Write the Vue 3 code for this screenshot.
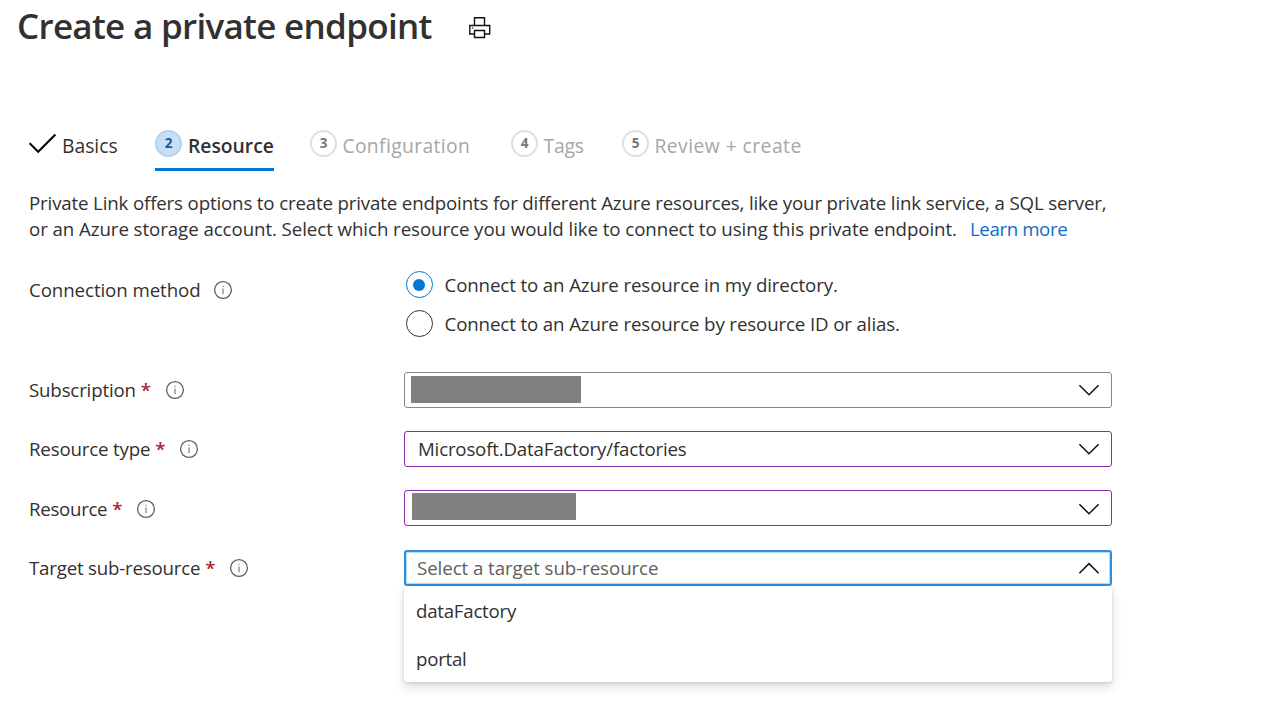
<script setup>
import { ref } from 'vue'

const steps = [
  { n: 1, label: 'Basics', state: 'done', key: 'basics' },
  { n: 2, label: 'Resource', state: 'active', key: 'res' },
  { n: 3, label: 'Configuration', state: 'todo', key: 'config' },
  { n: 4, label: 'Tags', state: 'todo', key: 'tags' },
  { n: 5, label: 'Review + create', state: 'todo', key: 'review' },
]
const fields = [
  { key: 'subscription', label: 'Subscription', redacted: true },
  { key: 'type', label: 'Resource type', value: 'Microsoft.DataFactory/factories', edited: true },
  { key: 'resource', label: 'Resource', redacted: true, edited: true },
  { key: 'target', label: 'Target sub-resource', placeholder: 'Select a target sub-resource', options: ['dataFactory', 'portal'] },
]
const methods = [
  'Connect to an Azure resource in my directory.',
  'Connect to an Azure resource by resource ID or alias.',
]
const method = ref(0)
</script>

<template>
  <main class="page">
    <header class="header">
      <h1>Create a private endpoint</h1>
      <svg class="printer" width="24" height="24" viewBox="0 0 24 24" fill="none" stroke="#111" stroke-width="1.4">
        <path d="M6.5 9V1.8h10V9" />
        <path d="M6.5 18H1.8V9.5h19.9V18h-5.2" />
        <path d="M6.5 14.5h10v7h-10z" />
        <path d="M4 12h1.5" stroke-width="1" />
      </svg>
    </header>

    <nav class="steps">
      <div v-for="s in steps" :key="s.key" class="step" :class="[s.state, s.key]">
        <svg v-if="s.state === 'done'" class="check" width="28" height="22" viewBox="0 0 28 22" fill="none" stroke="#000" stroke-width="2.1">
          <path d="M.6 10.2 9.2 18.8 26.4 1.6" />
        </svg>
        <span v-else class="num">{{ s.n }}</span>
        <span class="name">{{ s.label }}</span>
      </div>
    </nav>

    <p class="intro">
      <span class="line one">Private Link offers options to create private endpoints for different Azure resources, like your private link service, a SQL server,</span>
      <span class="line"><span class="two">or an Azure storage account. Select which resource you would like to connect to using this private endpoint.</span><a class="learn">Learn more</a></span>
    </p>

    <section class="method">
      <div class="label connection">
        <span class="text">Connection method</span>
        <svg class="info" width="20" height="20" viewBox="0 0 20 20"><circle cx="10" cy="10" r="8.4" fill="none" stroke="#605e5c" stroke-width="1.3" /><path d="M10 8.6v5.6M10 5.7v1.4" stroke="#8a8886" stroke-width="1.3" /></svg>
      </div>
      <div class="radios">
        <div v-for="(m, i) in methods" :key="m" class="radio" :class="{ on: method === i }" @click="method = i">
          <span class="ring"><span v-if="method === i" class="dot"></span></span>
          <span class="text">{{ m }}</span>
        </div>
      </div>
    </section>

    <section class="fields">
      <div v-for="f in fields" :key="f.key" class="field" :class="f.key">
        <div class="label">
          <span class="text">{{ f.label }}</span>
          <span class="star">*</span>
          <svg class="info" width="20" height="20" viewBox="0 0 20 20"><circle cx="10" cy="10" r="8.4" fill="none" stroke="#605e5c" stroke-width="1.3" /><path d="M10 8.6v5.6M10 5.7v1.4" stroke="#8a8886" stroke-width="1.3" /></svg>
        </div>
        <div class="select" :class="{ edited: f.edited, open: f.options }">
          <span v-if="f.redacted" class="redacted"></span>
          <span v-else-if="f.value" class="value">{{ f.value }}</span>
          <span v-else class="placeholder">{{ f.placeholder }}</span>
          <svg class="chevron" width="22" height="14" viewBox="0 0 22 14" fill="none" stroke="#111" stroke-width="1.5">
            <path :d="f.options ? 'M1.4 12.2 11 2.6l9.6 9.6' : 'M1.4 2.2 11 11.8l9.6-9.6'" />
          </svg>
          <div v-if="f.options" class="menu">
            <div v-for="o in f.options" :key="o" class="option">{{ o }}</div>
          </div>
        </div>
      </div>
    </section>
  </main>
</template>

<style>
body { background: #fff; }
</style>

<style scoped>
.page {
  box-sizing: border-box;
  width: 1276px;
  height: 728px;
  overflow: hidden;
  background: #fff;
  color: #323130;
  font-family: "Open Sans", "Noto Sans", sans-serif;
  font-size: 18.7px;
  line-height: 26px;
  white-space: nowrap;
}
.header { display: flex; align-items: flex-start; height: 54px; padding-left: 17px; }
h1 { margin: 0; width: 451px; font-size: 35px; font-weight: 600; line-height: 52px; letter-spacing: -0.7px; }
.printer { display: block; margin-top: 16px; }
.steps { display: flex; height: 41px; margin: 76px 0 0 29px; font-size: 19.3px; }
.step { display: flex; box-sizing: border-box; height: 41px; }
.check { margin: 3px 5px 0 0; }
.name { line-height: 32px; }
.num {
  box-sizing: border-box;
  width: 27px;
  height: 27px;
  margin-right: 6px;
  border: 2px solid #dfdfdf;
  border-radius: 50%;
  font-size: 13.5px;
  font-weight: 700;
  line-height: 23px;
  text-align: center;
  color: #767676;
}
.todo { color: #a6a6a6; }
.todo .name { margin-left: -0.6px; }
.active { border-bottom: 3px solid #0078d4; font-weight: 600; }
.active .num { background: #c7e0f1; border-color: #b3d0fb; color: #0f5ba5; }
.basics { width: 126px; }
.res { width: 119px; margin-right: 36px; }
.config { width: 201px; letter-spacing: 0.36px; }
.tags { width: 111px; letter-spacing: -0.15px; }
.review { letter-spacing: 0.46px; }
.num { letter-spacing: 0; }
.intro { margin: 19px 0 0 29px; }
.line { display: block; }
.one { letter-spacing: -0.154px; }
.two { letter-spacing: -0.07px; }
.learn { margin-left: 13px; color: #0f6cce; letter-spacing: -0.38px; }
.method { display: flex; margin: 29px 0 0 29px; height: 101px; }
.label { display: flex; align-items: center; width: 375px; }
.connection { height: 38px; letter-spacing: -0.08px; }
.info { flex: none; margin-left: 12.4px; }
.field .info { margin-left: 13.8px; }
.star { margin-left: 5px; color: #a4262c; font-weight: 600; }
.radios { display: flex; flex-direction: column; gap: 12px; padding-left: 2px; letter-spacing: -0.12px; }
.radio { display: flex; align-items: center; height: 27px; }
.ring {
  display: flex;
  align-items: center;
  justify-content: center;
  box-sizing: border-box;
  width: 27px;
  height: 27px;
  margin-right: 11.5px;
  border: 1.4px solid #323130;
  border-radius: 50%;
}
.on .ring { border-color: #0078d4; }
.dot { width: 12px; height: 12px; margin-left: -1px; border-radius: 50%; background: #0078d4; }
.fields { display: flex; flex-direction: column; gap: 23.2px; margin-left: 29px; }
.field { display: flex; height: 36px; }
.subscription .text, .type .text { letter-spacing: -0.17px; }
.resource .text { letter-spacing: -0.3px; }
.resource .label { padding-top: 0.8px; }
.resource .chevron { margin-top: 1px; }
.target .text { letter-spacing: -0.2px; }
.select {
  position: relative;
  display: flex;
  align-items: center;
  box-sizing: border-box;
  width: 708px;
  height: 36px;
  padding: 0 11px 0 13px;
  border: 1px solid #8a8886;
  border-radius: 3px;
}
.edited { border-color: #8a2da5; }
.open { border: 2px solid #2f8fdc; padding: 0 10px 0 11px; box-shadow: inset 0 0 0 1px #b9daf4; }
.value { letter-spacing: -0.19px; }
.placeholder { color: #605e5c; letter-spacing: -0.06px; }
.chevron { margin-left: auto; }
.redacted { width: 170px; height: 27px; margin-left: -7px; margin-top: -1px; background: #808080; }
.resource .redacted { width: 164px; margin-left: -6px; margin-top: -3px; }
.menu {
  position: absolute;
  top: 34px;
  left: -2px;
  width: 708px;
  height: 96px;
  background: #fff;
  border-radius: 0 0 3px 3px;
  box-shadow: 0 5px 11px rgba(0, 0, 0, 0.14), 0 1px 3px rgba(0, 0, 0, 0.12);
}
.option { height: 48px; padding-left: 12px; line-height: 50px; letter-spacing: -0.25px; }
</style>
